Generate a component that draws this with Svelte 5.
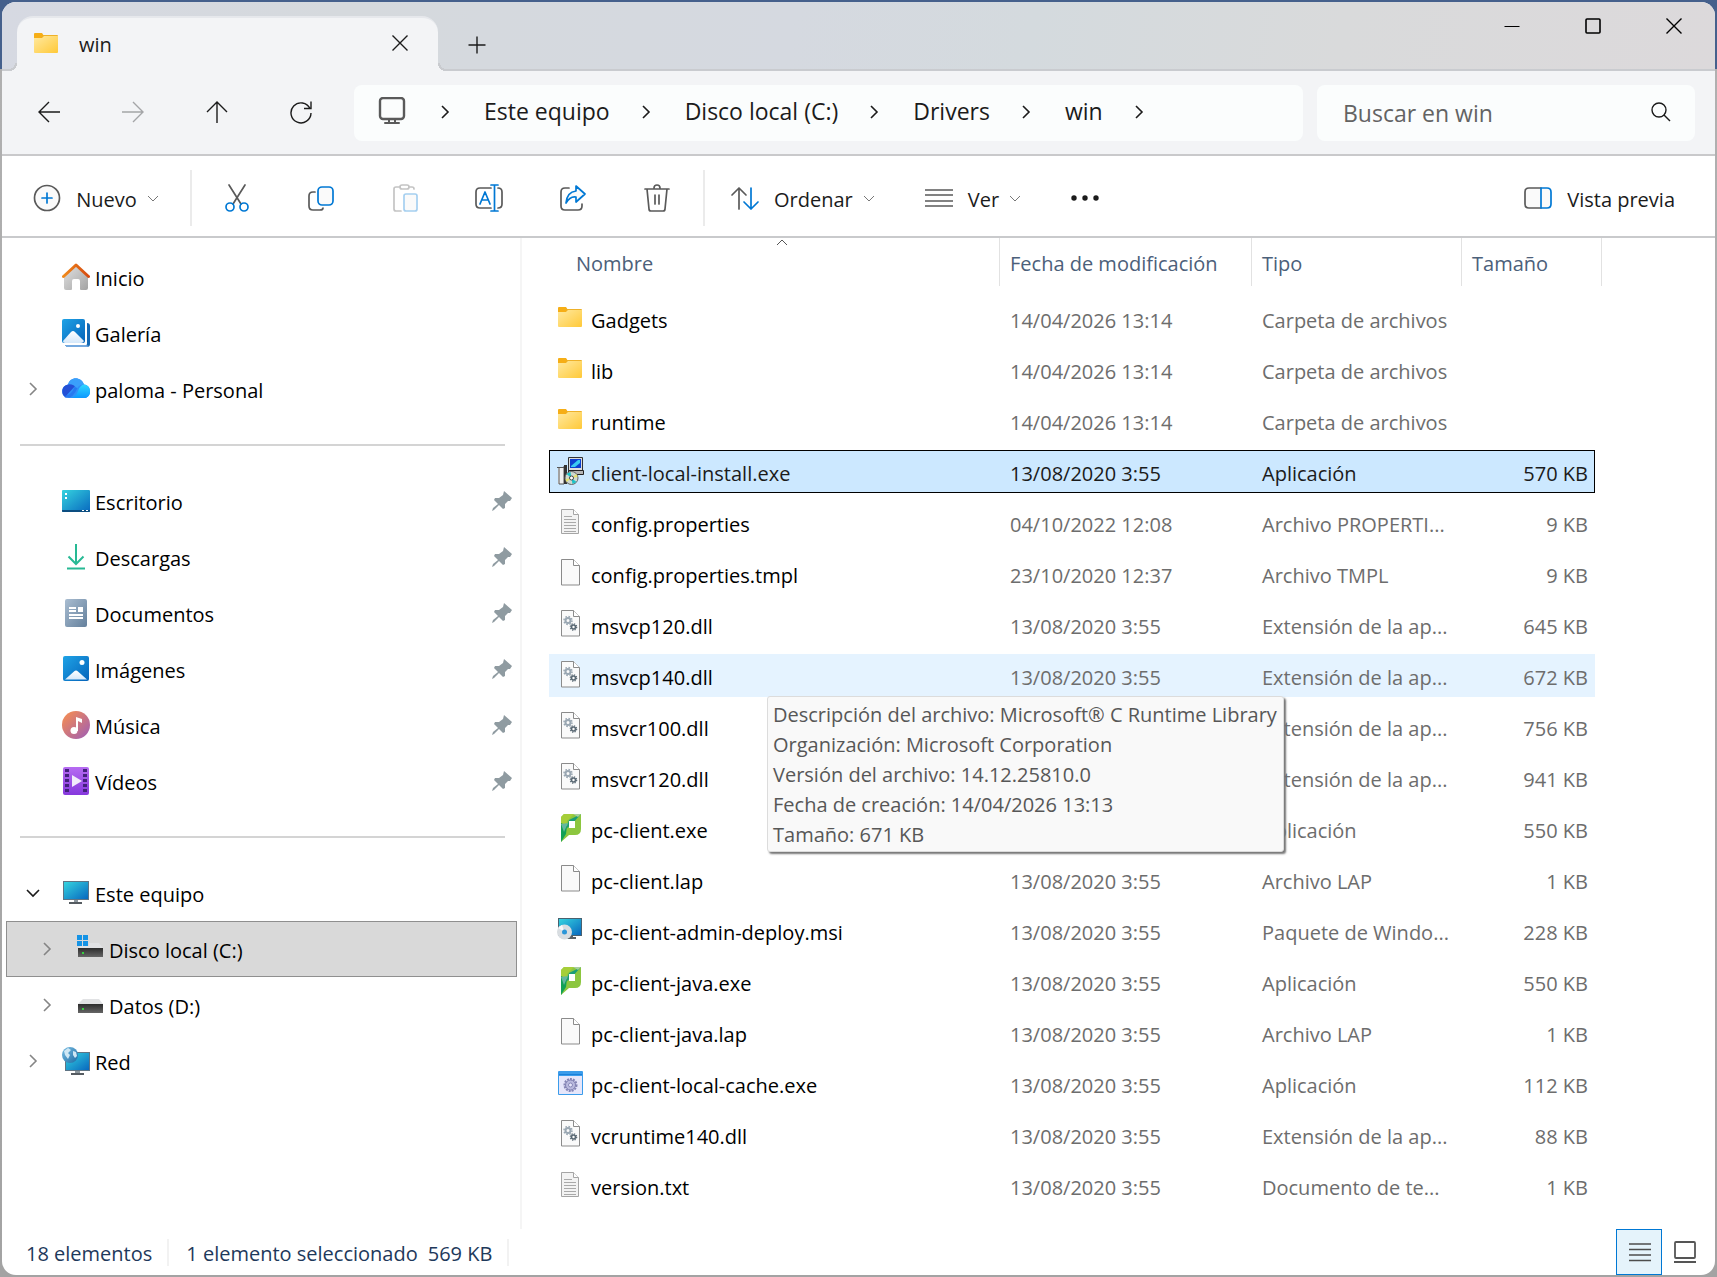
<script>
  const places = [
    { icon: 'home', label: 'Inicio' },
    { icon: 'gallery', label: 'Galería' },
    { icon: 'cloud', label: 'paloma - Personal', chevron: 'right' },
    { divider: true },
    { icon: 'desktop', label: 'Escritorio', pinned: true },
    { icon: 'download', label: 'Descargas', pinned: true },
    { icon: 'documents', label: 'Documentos', pinned: true },
    { icon: 'pictures', label: 'Imágenes', pinned: true },
    { icon: 'music', label: 'Música', pinned: true },
    { icon: 'video', label: 'Vídeos', pinned: true },
    { divider: true },
    { icon: 'pc', label: 'Este equipo', chevron: 'down' },
    { icon: 'driveC', label: 'Disco local (C:)', chevron: 'right', nested: true, current: true },
    { icon: 'drive', label: 'Datos (D:)', chevron: 'right', nested: true },
    { icon: 'network', label: 'Red', chevron: 'right' }
  ];

  const files = [
    ['folder', 'Gadgets', '14/04/2026 13:14', 'Carpeta de archivos', ''],
    ['folder', 'lib', '14/04/2026 13:14', 'Carpeta de archivos', ''],
    ['folder', 'runtime', '14/04/2026 13:14', 'Carpeta de archivos', ''],
    ['installer', 'client-local-install.exe', '13/08/2020 3:55', 'Aplicación', '570 KB'],
    ['text', 'config.properties', '04/10/2022 12:08', 'Archivo PROPERTI...', '9 KB'],
    ['blank', 'config.properties.tmpl', '23/10/2020 12:37', 'Archivo TMPL', '9 KB'],
    ['dll', 'msvcp120.dll', '13/08/2020 3:55', 'Extensión de la ap...', '645 KB'],
    ['dll', 'msvcp140.dll', '13/08/2020 3:55', 'Extensión de la ap...', '672 KB'],
    ['dll', 'msvcr100.dll', '13/08/2020 3:55', 'Extensión de la ap...', '756 KB'],
    ['dll', 'msvcr120.dll', '13/08/2020 3:55', 'Extensión de la ap...', '941 KB'],
    ['papercut', 'pc-client.exe', '13/08/2020 3:55', 'Aplicación', '550 KB'],
    ['blank', 'pc-client.lap', '13/08/2020 3:55', 'Archivo LAP', '1 KB'],
    ['msi', 'pc-client-admin-deploy.msi', '13/08/2020 3:55', 'Paquete de Windo...', '228 KB'],
    ['papercut', 'pc-client-java.exe', '13/08/2020 3:55', 'Aplicación', '550 KB'],
    ['blank', 'pc-client-java.lap', '13/08/2020 3:55', 'Archivo LAP', '1 KB'],
    ['app', 'pc-client-local-cache.exe', '13/08/2020 3:55', 'Aplicación', '112 KB'],
    ['dll', 'vcruntime140.dll', '13/08/2020 3:55', 'Extensión de la ap...', '88 KB'],
    ['text', 'version.txt', '13/08/2020 3:55', 'Documento de te...', '1 KB']
  ];

  const details = [
    'Descripción del archivo: Microsoft® C Runtime Library',
    'Organización: Microsoft Corporation',
    'Versión del archivo: 14.12.25810.0',
    'Fecha de creación: 14/04/2026 13:13',
    'Tamaño: 671 KB'
  ];

  const crumbs = ['Este equipo', 'Disco local (C:)', 'Drivers', 'win'];
  const actions = [
    ['cut', 'Cortar'],
    ['copy', 'Copiar'],
    ['paste', 'Pegar'],
    ['rename', 'Cambiar nombre'],
    ['share', 'Compartir'],
    ['trash', 'Eliminar']
  ];
  const selected = 3;
  const hovered = 7;
  let query = $state('');
</script>

{#snippet chev(dir)}
  <svg class="chev" width="14" height="14" viewBox="0 0 14 14" fill="none" stroke="currentColor" stroke-width={dir === 'small' || dir === 'up' ? 1 : 1.6} aria-hidden="true">
    {#if dir === 'right'}<path d="M4 1l6 6-6 6" />
    {:else if dir === 'down'}<path d="M1 4l6 6 6-6" />
    {:else if dir === 'small'}<path d="M2 5l5 5 5-5" />
    {:else}<path d="M2 9l5-5 5 5" />{/if}
  </svg>
{/snippet}

{#snippet page()}
  <path d="M5.500 .5h12l6 6v19.500h-18z" fill="#fafafa" stroke="#8b8b8b" />
  <path d="M17.500 .5v6h6" fill="#fff" stroke="#8b8b8b" />
{/snippet}

{#snippet screen()}
  <path d="M1 2h26v19H1z" fill="#5f7484" />
  <path d="M2 3h24v17H2z" fill="url(#screenBlue)" />
  <path d="M12 21h4v2h-4z" fill="#8d979e" />
  <path d="M7 23h13v2H7z" fill="#555b61" />
{/snippet}

{#snippet driveBody()}
  <path d="M7 8h16l4 5H2z" fill="#e1e2e4" />
  <path d="M2 13h25v9H2z" fill="url(#darkDrive)" />
  <path d="M6 17h2v2H6z" fill="#35d13f" />
{/snippet}

{#snippet icon(name)}
  <svg class="icon" width="28" height="28" viewBox="0 0 28 28" fill="none" aria-hidden="true">
    {#if name === 'folder'}
      <path d="M2 4q0-1 1-1h7l2 3v4H2z" fill="#f6ae16" />
      <path d="M11 5h14q1 0 1 1v4H9z" fill="#eeb129" />
      <path d="M2 8h8l2-2h14v16q0 1-1 1H3q-1 0-1-1z" fill="url(#folderYellow)" />
    {:else if name === 'home'}
      <path d="M2 12L14 2l12 10v13q0 2-2 2h-5q-1 0-1-1v-8q0-2-2-2h-4q-2 0-2 2v8q0 1-1 1H4q-2 0-2-2z" fill="url(#silver)" />
      <path d="M1.500 13.500L14 2l12.500 11.500" stroke="url(#roof)" stroke-width="3" stroke-linecap="round" stroke-linejoin="round" />
    {:else if name === 'gallery'}
      <path d="M25 4q3 0 3 3v18q0 3-3 3H6q-2 0-3-2h21q1 0 1-1z" fill="#1268b4" />
      <path d="M3 26h21l3 1-2 1H5z" fill="#75a9df" />
      <rect width="23" height="24" rx="2" fill="url(#photoBlue)" />
      <path d="M1 22l8-9q2-2 4 0l9 9q-1 2-3 2H3q-2 0-2-2z" fill="url(#snow)" />
      <circle cx="16" cy="7" r="2" fill="#fff" />
    {:else if name === 'cloud'}
      <path d="M7 23C-2 23-2 11 6 9.500 8 1 19 1 22 9.500 30 10 30 23 22 23z" fill="#2f8ff8" />
      <path d="M6 9.500C-1 11-1 19 3 22L14 10q-4-3-8-.5z" fill="#2450d6" />
      <path d="M6 9.500C9 1 20 2 22 9.500q-5 0-7 4-4-5-9-4z" fill="#3aa0fb" />
      <path d="M9 23q5-1 7-7 2-6 6-6.500C30 10 30 23 22 23z" fill="url(#cyan)" />
      <path d="M3 21.500q7 1 11-9" stroke="#1d63ea" stroke-width="3" opacity=".5" />
    {:else if name === 'desktop'}
      <rect y="3" width="28" height="22" rx="1" fill="url(#screenBlue)" />
      <path d="M0 23h28v1q0 1-1 1H1q-1 0-1-1z" fill="#0c4d80" />
      <path d="M3 6h2v2H3zM3 10h2v2H3zM20 23h2v1h-2zM24 23h2v1h-2z" fill="#fff" />
    {:else if name === 'download'}
      <path d="M14 1v20M6.500 13.500L14 21l7.500-7.500M5 25.500h18" stroke="#27b994" stroke-width="2" />
    {:else if name === 'documents'}
      <rect x="3" width="22" height="28" rx="2" fill="url(#slate)" />
      <path d="M7 9h7M7 12h7M7 16h14M7 19h14" stroke="#fff" stroke-width="2" />
      <path d="M16 8h5v5h-5z" fill="#fff" />
    {:else if name === 'pictures'}
      <rect x="1" y="1" width="26" height="25" rx="2" fill="url(#photoBlue)" />
      <path d="M3 24.500l9-8q2-2 4 0l9 8z" fill="url(#snow)" />
      <circle cx="20" cy="7.500" r="2.500" fill="#fff" />
    {:else if name === 'music'}
      <circle cx="14" cy="14" r="14" fill="url(#musicFill)" />
      <circle cx="12" cy="19.500" r="3.500" fill="#fff" />
      <path d="M14 20V6l6 2v4l-4-2v10z" fill="#fff" />
    {:else if name === 'video'}
      <rect x="1" width="26" height="28" rx="2" fill="url(#purple)" />
      <path d="M5 2v25M23 2v25" stroke="#43207c" stroke-width="4" stroke-dasharray="3 2" />
      <path d="M10 8l10 6-10 6z" fill="#f1ebfb" />
    {:else if name === 'pc'}
      {@render screen()}
    {:else if name === 'drive'}
      {@render driveBody()}
    {:else if name === 'driveC'}
      {@render driveBody()}
      <path d="M0 0h13v11H0z" fill="#d9d9d9" />
      <path d="M1 0h5v5H1zM7 0h5v5H7zM1 6h5v5H1zM7 6h5v5H7z" fill="#1593e5" />
    {:else if name === 'network'}
      <path d="M3 5h25v19H3z" fill="#5f7484" />
      <path d="M4 6h23v17H4z" fill="url(#screenBlue)" />
      <path d="M13 24h5v2h-5z" fill="#8d979e" />
      <path d="M9 26h13v2H9z" fill="#555b61" />
      <circle cx="8" cy="8" r="8" fill="url(#globe)" />
      <path d="M2 4l4-3 3 2-3 3 2 2-2 4-3-4zM11 4l3 1 1 4-2 2-2-3z" fill="#cfe7f4" />
    {:else if name === 'text'}
      <path d="M5.500 1.500h12l5 5v19h-17z" fill="#f3f3f3" stroke="#a5a5a5" />
      <path d="M17.500 1.500v5h5" fill="#fff" stroke="#a5a5a5" />
      <path d="M8 8.500h8M8 11.500h12M8 14.500h12M8 17.500h12M8 20.500h12M8 23.500h12" stroke="#a9a9a9" />
    {:else if name === 'blank'}
      {@render page()}
    {:else if name === 'dll'}
      {@render page()}
      <circle cx="12" cy="10.500" r="2.500" stroke="#9aa7b2" stroke-width="2" />
      <circle cx="12" cy="10.500" r="4" stroke="#9aa7b2" stroke-width="1.500" stroke-dasharray="1.600 1.540" />
      <circle cx="17.500" cy="17" r="2" stroke="#596873" stroke-width="1.600" />
      <circle cx="17.500" cy="17" r="3.200" stroke="#596873" stroke-width="1.200" stroke-dasharray="1.300 1.213" />
    {:else if name === 'papercut'}
      <path d="M5 3l3-3h17v15q0 6-6 6h-6l-8 7z" fill="#8cc63f" />
      <path d="M5 3l3-3h10l-7 7-1 10-5 4z" fill="#a6ce39" />
      <path d="M5 9l6 3-1 8-5 8z" fill="#12a155" />
      <path d="M5 10l7-1-4 9z" fill="#63b7a0" />
      <path d="M25 0L13 6l-3 9 6-5z" fill="#1a9d77" />
      <path d="M17 0h8l-3 3z" fill="#a9cf9d" />
      <path d="M13 7h6v7h-6z" fill="#fff" />
    {:else if name === 'msi'}
      <path d="M2 2h24v18H2z" fill="#49616f" />
      <path d="M3 3h22v16H3z" fill="url(#screenBlue)" />
      <path d="M12 20h5v1h3v2H10z" fill="#5a6166" />
      <circle cx="8.500" cy="16" r="7.500" fill="#d8dde1" />
      <path d="M8.500 16L2 12a7.500 7.500 0 014-3z" fill="#f7f8f9" />
      <circle cx="8.500" cy="16" r="2.500" fill="#2b96d8" />
    {:else if name === 'app'}
      <rect x="2" y="2" width="25" height="24" rx="1" fill="#3b9ceb" />
      <path d="M3 7h23v18H3z" fill="#e6e6fa" />
      <path d="M3 5h23v1H3z" fill="#1a80d9" />
      <circle cx="14.500" cy="16" r="5" fill="#b9b9de" stroke="#7f7fb0" />
      <circle cx="14.500" cy="16" r="6" stroke="#8585b5" stroke-width="2" stroke-dasharray="2 1" />
      <circle cx="14.500" cy="16" r="2" fill="#e6e6fa" stroke="#8787b8" />
    {:else if name === 'installer'}
      <path d="M2 10h8v17H2z" fill="#efefef" />
      <path d="M1 10.500h9M3 11v16h5V9" stroke="#555" />
      <path d="M8 8h3v19H8z" fill="#333" />
      <path d="M12.500 .5h14v13h-14z" fill="#ddd" stroke="#333" />
      <path d="M14 2h11v9H14z" fill="#0d3fd0" />
      <path d="M15 9l7-6h2v3l-5 4h-4z" fill="#3bc9f2" />
      <path d="M12.500 13.500h15v4h-15z" fill="#b5b5b5" stroke="#222" />
      <circle cx="15.500" cy="21" r="6.500" fill="#cfd8cf" stroke="#666" />
      <path d="M15.500 21l-5-4 4-2zM15.500 21l5 4-4 2z" fill="#19c3c9" />
      <path d="M15.500 21l5-4 1 3zM15.500 21l-5 4-1-3z" fill="#e8e36c" />
      <circle cx="15.500" cy="21" r="2" fill="#fff" stroke="#444" />
    {/if}
  </svg>
{/snippet}

{#snippet tool(name)}
  <svg class="tool" width="30" height="30" viewBox="0 0 30 30" fill="none" stroke="#5a5a5a" stroke-width="1.700" stroke-linecap="round" stroke-linejoin="round" aria-hidden="true">
    {#if name === 'new'}
      <circle cx="15" cy="15" r="12.500" fill="#fafafa" />
      <path d="M15 10v10M10 15h10" stroke="#0078d4" />
    {:else if name === 'cut'}
      <path d="M7 2l12 19M23 2L11 21" />
      <circle cx="8" cy="24" r="4" stroke="#0078d4" />
      <circle cx="22" cy="24" r="4" stroke="#0078d4" />
    {:else if name === 'copy'}
      <path d="M9 9H7q-4 0-4 4v10q0 4 4 4h7q3 0 3-2" />
      <rect x="12" y="4" width="15" height="18" rx="4" fill="#fafafa" stroke="#0078d4" />
    {:else if name === 'paste'}
      <path d="M10 4H6q-2 0-2 2v20q0 2 2 2h5M19 4h3q2 0 2 2" stroke="#c4c4c4" />
      <rect x="10" y="2" width="9" height="4" rx="2" stroke="#c4c4c4" />
      <rect x="14" y="11" width="13" height="17" rx="2" fill="#fafafa" stroke="#a5cff0" />
    {:else if name === 'rename'}
      <path d="M17 5H6Q2 5 2 9v12q0 4 4 4h11M24 5q4 0 4 4v12q0 4-4 4" />
      <path d="M6 21l5-12 5 12M8 17h6M20.500 2v26M17 2h7M17 28h7" stroke="#0078d4" />
    {:else if name === 'share'}
      <path d="M11 5H7Q3 5 3 9v14q0 4 4 4h13q4 0 4-4v-2" />
      <path d="M18 3l9 8-9 8v-5q-6-1-10 6 1-11 10-12z" fill="#fafafa" stroke="#0078d4" />
    {:else if name === 'trash'}
      <path d="M3 6h24M12 5q0-3 3-3t3 3M5 6l2 20q0 2 2 2h12q2 0 2-2l2-20" />
      <path d="M13 12v9M17 12v9" />
    {:else if name === 'sort'}
      <path d="M9 26V5M2 12l7-7 7 7" />
      <path d="M21 5v21M14 19l7 7 7-7" stroke="#0078d4" />
    {:else if name === 'list'}
      <path d="M1 7h28M1 12h28M1 18h28M1 23h28" stroke-linecap="butt" />
    {:else if name === 'preview'}
      <path d="M18 5H6Q2 5 2 9v12q0 4 4 4h12" fill="#fafafa" />
      <path d="M18 5h6q4 0 4 4v12q0 4-4 4h-6z" fill="#fafafa" stroke="#0078d4" />
    {:else if name === 'more'}
      <g fill="#1b1b1b" stroke="none"><circle cx="4" cy="15" r="2.700" /><circle cx="15" cy="15" r="2.700" /><circle cx="26" cy="15" r="2.700" /></g>
    {:else if name === 'monitor'}
      <rect x="3" y="1" width="24" height="21" rx="3" stroke-width="2.400" />
      <path d="M12 22v4M18 22v4M8 26h14" stroke-width="2" />
    {/if}
  </svg>
{/snippet}

{#snippet line(name)}
  <svg class="line" width="24" height="24" viewBox="0 0 24 24" fill="none" stroke="currentColor" stroke-width="1.400" aria-hidden="true">
    {#if name === 'back'}<path d="M23 12H2M12 2L2 12l10 10" />
    {:else if name === 'forward'}<path d="M1 12h21M12 2l10 10-10 10" />
    {:else if name === 'up'}<path d="M12 23V2M2 12L12 2l10 10" />
    {:else if name === 'refresh'}<path d="M21 8.500A10 10 0 1022 13M22 1.500v7h-7" />
    {:else if name === 'close'}<path d="M4.500 4.500l15 15M19.500 4.500l-15 15" />
    {:else if name === 'plus'}<path d="M12 3.500v17M3.500 12h17" />
    {:else if name === 'min'}<path d="M4.500 12.500h15" stroke-width="1" />
    {:else if name === 'max'}<rect x="5" y="5" width="14" height="14" rx="1" stroke-width="1.600" />
    {:else if name === 'search'}<circle cx="10" cy="9" r="7" /><path d="M15 14l6 6" />{/if}
  </svg>
{/snippet}

<svg class="defs" width="0" height="0" aria-hidden="true">
  <defs>
    <linearGradient id="folderYellow" x1="0" y1="0" x2="1" y2="1"><stop stop-color="#ffe9a0" /><stop offset="1" stop-color="#ffc938" /></linearGradient>
    <linearGradient id="silver" x1="0" y1="0" x2="1" y2="1"><stop stop-color="#e2e2e2" /><stop offset="1" stop-color="#a3a3a3" /></linearGradient>
    <linearGradient id="roof"><stop stop-color="#f08a1c" /><stop offset="1" stop-color="#d64a10" /></linearGradient>
    <linearGradient id="photoBlue" x1="0" y1="0" x2="1" y2="1"><stop stop-color="#1fa3e6" /><stop offset="1" stop-color="#0563ba" /></linearGradient>
    <linearGradient id="snow" x1="0" y1="0" x2="0" y2="1"><stop stop-color="#fff" /><stop offset="1" stop-color="#d5e8fa" /></linearGradient>
    <linearGradient id="screenBlue" x1="0" y1="0" x2="1" y2="1"><stop stop-color="#35d3df" /><stop offset="1" stop-color="#0868bf" /></linearGradient>
    <linearGradient id="cyan" x1="0" y1="0" x2="0" y2="1"><stop stop-color="#2fd6ff" /><stop offset="1" stop-color="#0c98ff" /></linearGradient>
    <linearGradient id="darkDrive" x1="0" y1="0" x2="0" y2="1"><stop stop-color="#2c2c2c" /><stop offset="1" stop-color="#666" /></linearGradient>
    <linearGradient id="slate" x1="0" y1="0" x2="1" y2="1"><stop stop-color="#a9bdd1" /><stop offset="1" stop-color="#64809c" /></linearGradient>
    <linearGradient id="musicFill" x1="0" y1="0" x2="1" y2="1"><stop offset=".1" stop-color="#f28b56" /><stop offset="1" stop-color="#9c5cb8" /></linearGradient>
    <linearGradient id="purple" x1="0" y1="0" x2="0" y2="1"><stop stop-color="#b66bf2" /><stop offset="1" stop-color="#8638dd" /></linearGradient>
    <linearGradient id="globe" x1="0" y1="0" x2="1" y2="1"><stop stop-color="#7cc0e4" /><stop offset="1" stop-color="#1d6ba5" /></linearGradient>
  </defs>
</svg>

<div class="desktop">
  <div class="window">
    <header class="titlebar">
      <div class="tab">
        {@render icon('folder')}
        <span class="tab-name">win</span>
        <button class="tab-close" aria-label="Cerrar pestaña">{@render line('close')}</button>
      </div>
      <button class="tab-add" aria-label="Nueva pestaña">{@render line('plus')}</button>
      <div class="caption">
        <button aria-label="Minimizar">{@render line('min')}</button>
        <button aria-label="Maximizar">{@render line('max')}</button>
        <button aria-label="Cerrar">{@render line('close')}</button>
      </div>
    </header>

    <div class="navbar">
      <div class="history">
        <button aria-label="Atrás">{@render line('back')}</button>
        <button class="off" aria-label="Adelante">{@render line('forward')}</button>
        <button aria-label="Arriba">{@render line('up')}</button>
        <button aria-label="Actualizar">{@render line('refresh')}</button>
      </div>
      <nav class="address" aria-label="Ruta">
        {@render tool('monitor')}
        {@render chev('right')}
        {#each crumbs as crumb}
          <a href="#{crumb}">{crumb}</a>
          {@render chev('right')}
        {/each}
      </nav>
      <label class="search">
        <input type="text" placeholder="Buscar en win" aria-label="Buscar en win" bind:value={query} />
        {@render line('search')}
      </label>
    </div>

    <div class="toolbar">
      <button class="labelled new">{@render tool('new')}<span>Nuevo</span>{@render chev('small')}</button>
      <div class="actions">
        {#each actions as [name, label]}
          <button aria-label={label}>{@render tool(name)}</button>
        {/each}
      </div>
      <button class="labelled sort">{@render tool('sort')}<span>Ordenar</span>{@render chev('small')}</button>
      <button class="labelled view">{@render tool('list')}<span>Ver</span>{@render chev('small')}</button>
      <button class="more" aria-label="Ver más">{@render tool('more')}</button>
      <button class="labelled preview">{@render tool('preview')}<span>Vista previa</span></button>
    </div>

    <main class="body">
      <nav class="sidebar" aria-label="Panel de navegación">
        <ul>
          {#each places as place}
            {#if place.divider}
              <li class="divider"><hr /></li>
            {:else}
              <li class:nested={place.nested} class:current={place.current}>
                <span class="toggle">
                  {#if place.chevron}
                    <button class:open={place.chevron === 'down'} aria-label="Expandir {place.label}">{@render chev(place.chevron)}</button>
                  {/if}
                </span>
                <a href="#{place.label}">{@render icon(place.icon)}<span>{place.label}</span></a>
                {#if place.pinned}
                  <svg class="pin" width="20" height="20" viewBox="0 0 20 20" aria-hidden="true">
                    <path d="M12 0l8 7-2 3-2 0-3 3v4l-2 1-4-4-5 5-2 1 1-3 5-4-4-4 1-2h4l4-3z" fill="#8f9ba1" />
                  </svg>
                {/if}
              </li>
            {/if}
          {/each}
        </ul>
      </nav>

      <section class="files">
        <table>
          <thead>
            <tr>
              <th class="name"><button>Nombre<span class="sorted">{@render chev('up')}</span></button></th>
              <th class="date"><button>Fecha de modificación</button></th>
              <th class="type"><button>Tipo</button></th>
              <th class="size"><button>Tamaño</button></th>
            </tr>
          </thead>
          <tbody>
            {#each files as [kind, name, date, type, size], i}
              <tr class:selected={i === selected} class:hovered={i === hovered}>
                <td class="name">
                  <div class="file">{@render icon(kind)}<span>{name}</span></div>
                  {#if i === hovered}
                    <div class="tooltip" role="tooltip">
                      {#each details as detail}<div>{detail}</div>{/each}
                    </div>
                  {/if}
                </td>
                <td>{date}</td>
                <td>{type}</td>
                <td class="size">{size}</td>
              </tr>
            {/each}
          </tbody>
        </table>
      </section>
    </main>

    <footer class="status">
      <span class="count">18 elementos</span>
      <span class="chosen"><span>1 elemento seleccionado</span><span>569 KB</span></span>
      <div class="modes">
        <button class="on" aria-label="Detalles">
          <svg width="24" height="24" viewBox="0 0 24 24" stroke="#4d4d4d" stroke-width="1.600" aria-hidden="true"><path d="M2 4h22M2 9.500h22M2 15h22M2 20.500h22" /></svg>
        </button>
        <button aria-label="Iconos grandes">
          <svg width="24" height="24" viewBox="0 0 24 24" fill="none" stroke="#555" stroke-width="1.800" aria-hidden="true"><rect x="2" y="2" width="20" height="16" rx="1" /><path d="M1 22h22" /></svg>
        </button>
      </div>
    </footer>
  </div>
</div>

<style>
  :global(body) {
    margin: 0;
  }
  .desktop {
    box-sizing: border-box;
    min-height: 100vh;
    padding: 2px;
    display: flex;
    background: linear-gradient(#45608c 69px, #b0b0b0 69px, #a3a3a3);
    font: 20px/28px 'Open Sans', 'Noto Sans', sans-serif;
    color: #1b1b1b;
  }
  .defs {
    position: absolute;
  }
  .window {
    flex: 1;
    min-width: 0;
    display: flex;
    flex-direction: column;
    background: #fff;
    border-radius: 14px;
    overflow: hidden;
  }
  button {
    display: flex;
    align-items: center;
    justify-content: center;
    margin: 0;
    padding: 0;
    border: 0;
    background: none;
    font: inherit;
    color: inherit;
  }
  a {
    color: inherit;
    text-decoration: none;
  }
  svg {
    flex: none;
    display: block;
  }

  .titlebar {
    display: flex;
    height: 67px;
    border-bottom: 2px solid #c9cbcf;
    background: linear-gradient(100deg, #d6d9e2, #d5d9dd 20%, #d5d9e0 46%, #d4dade 60%, #d9dadb 78%, #dcd9db);
  }
  .tab {
    position: relative;
    display: flex;
    align-items: center;
    box-sizing: border-box;
    width: 421px;
    height: 55px;
    margin: 14px 0 0 15px;
    padding: 0 26px 0 15px;
    border-top: 2px solid #e6e8ec;
    border-radius: 16px 16px 0 0;
    background: #f3f4f6;
  }
  .tab::before,
  .tab::after {
    content: '';
    position: absolute;
    bottom: 0;
    width: 8px;
    height: 8px;
  }
  .tab::before {
    right: 100%;
    background: radial-gradient(circle at 0 0, transparent 6px, #c9cbcf 6px, #c9cbcf 8px, #f3f4f6 8px);
  }
  .tab::after {
    left: 100%;
    background: radial-gradient(circle at 100% 0, transparent 6px, #c9cbcf 6px, #c9cbcf 8px, #f3f4f6 8px);
  }
  .tab > .icon {
    margin-bottom: 2px;
  }
  .tab-name {
    flex: 1;
    margin-left: 19px;
    font-weight: 500;
  }
  .tab-close {
    padding-bottom: 4px;
  }
  .tab-add {
    width: 78px;
    margin-top: 20px;
    height: 46px;
  }
  .caption {
    display: flex;
    margin-left: auto;
    padding-right: 1px;
    height: 48px;
  }
  .caption button {
    width: 81px;
    color: #000;
  }

  .navbar {
    display: flex;
    align-items: center;
    height: 83px;
    padding-right: 20px;
    border-bottom: 2px solid #c9c9cb;
    background: #f3f4f6;
  }
  .history {
    display: flex;
    box-sizing: border-box;
    width: 352px;
    padding: 0 0 2px 5px;
  }
  .history button {
    width: 84px;
    height: 54px;
  }
  .history .off {
    color: #a4a5a7;
  }
  .address,
  .search {
    box-sizing: border-box;
    display: flex;
    align-items: center;
    height: 56px;
    border-radius: 8px;
    background: #fbfdfd;
    font-size: 23px;
  }
  .address {
    flex: 1;
    min-width: 0;
    padding-left: 23px;
    white-space: nowrap;
  }
  .address > .tool {
    margin: 0 31px 2px 0;
  }
  .address .chev {
    margin-bottom: 2px;
  }
  .address a {
    margin: 0 29px 0 32px;
    padding-bottom: 4px;
  }
  .search {
    width: 378px;
    margin-left: 14px;
    padding: 0 22px 0 26px;
  }
  .search input {
    flex: 1;
    min-width: 0;
    padding: 0;
    border: 0;
    outline: 0;
    background: none;
    font: inherit;
    color: #1b1b1b;
  }
  .search input::placeholder {
    color: #636363;
    opacity: 1;
  }

  .toolbar {
    display: flex;
    align-items: center;
    box-sizing: border-box;
    height: 82px;
    padding-top: 3px;
    border-bottom: 2px solid #c9cacc;
  }
  .labelled {
    gap: 14px;
  }
  .labelled span {
    padding-top: 4px;
  }
  .toolbar .chev {
    color: #777;
    margin-left: -5px;
  }
  .new {
    width: 188px;
  }
  .actions {
    display: flex;
    height: 56px;
    padding: 0 4px 0 3px;
    border: solid #ebebeb;
    border-width: 0 2px;
  }
  .actions button {
    width: 84px;
  }
  .sort {
    margin-left: 25px;
  }
  .view,
  .more {
    margin-left: 48px;
  }
  .preview {
    margin: 0 40px 0 auto;
  }

  .body {
    flex: 1;
    display: flex;
    color: #000;
  }
  .sidebar {
    box-sizing: border-box;
    width: 520px;
    padding: 11px 3px 0 4px;
    border-right: 2px solid #f5f5f5;
  }
  ul {
    margin: 0;
    padding: 0;
    list-style: none;
  }
  li {
    display: flex;
    align-items: center;
    height: 56px;
    padding-right: 5px;
  }
  .divider {
    padding: 0 12px 0 14px;
  }
  hr {
    flex: 1;
    height: 2px;
    margin: 0;
    border: 0;
    background: #d4d4d4;
  }
  .nested {
    padding-left: 14px;
  }
  .current {
    background: #d9d9d9;
    box-shadow: inset 0 0 0 1px #8f8f8f;
  }
  .toggle {
    width: 56px;
    color: #858585;
  }
  .toggle button {
    width: 53px;
    height: 40px;
  }
  .toggle .open {
    color: #1b1b1b;
  }
  li a {
    flex: 1;
    display: flex;
    align-items: center;
    gap: 5px;
  }
  li a span {
    padding-top: 4px;
  }

  .files {
    flex: 1;
    min-width: 0;
    padding: 0 120px 0 27px;
  }
  table {
    width: 100%;
    margin-top: -8px;
    border-spacing: 0 8px;
    table-layout: fixed;
  }
  th {
    position: relative;
    height: 51px;
    padding: 0;
    vertical-align: top;
    font-weight: 400;
    color: #4c607a;
  }
  th button {
    box-sizing: border-box;
    width: 100%;
    height: 48px;
    padding: 4px 0 0 10px;
    justify-content: flex-start;
    border-right: 1px solid #e2e2e2;
  }
  th.name button {
    padding-left: 27px;
  }
  th.size button {
    width: 140px;
  }
  .sorted {
    position: absolute;
    top: -2px;
    left: 50%;
    color: #555;
  }
  th.date {
    width: 252px;
  }
  th.type {
    width: 210px;
  }
  th.size {
    width: 133px;
  }
  td {
    height: 39px;
    padding: 4px 0 0 10px;
    white-space: nowrap;
    color: #6d6d6d;
  }
  td.name {
    position: relative;
    height: 43px;
    padding: 0 0 0 7px;
    color: #000;
  }
  td.size {
    padding-right: 7px;
    text-align: right;
  }
  .file {
    display: flex;
    align-items: center;
    gap: 7px;
    padding-bottom: 2px;
  }
  .file span {
    padding-top: 6px;
  }
  .selected td {
    height: 37px;
    background: #cce8ff;
    color: #1b1b1b;
    border: solid #000;
    border-width: 1px 0;
  }
  .selected td:first-child {
    height: 41px;
    border-left-width: 1px;
    padding-left: 6px;
  }
  .selected td:last-child {
    border-right-width: 1px;
    padding-right: 6px;
  }
  .hovered td {
    background: #e5f3ff;
  }
  .tooltip {
    position: absolute;
    z-index: 2;
    top: 42px;
    left: 218px;
    padding: 3px 6px 1px 5px;
    border: 1px solid #dcdcdc;
    border-radius: 3px;
    background: #f9f9f9;
    box-shadow: 2px 2px 2px #777;
    line-height: 30px;
    color: #575757;
  }

  .status {
    display: flex;
    align-items: center;
    height: 46px;
    padding-left: 24px;
    color: #1e395b;
  }
  .count,
  .chosen {
    padding: 3px 15px 0 0;
    line-height: 24px;
    border-right: 2px solid #f2f2f2;
  }
  .chosen {
    display: flex;
    gap: 10px;
    padding-left: 17px;
  }
  .modes {
    display: flex;
    align-self: stretch;
    margin-left: auto;
    padding-right: 7px;
  }
  .modes button {
    box-sizing: border-box;
    width: 46px;
  }
  .modes .on {
    border: 1px solid #0078d4;
    background: #e5f3fb;
  }
</style>
